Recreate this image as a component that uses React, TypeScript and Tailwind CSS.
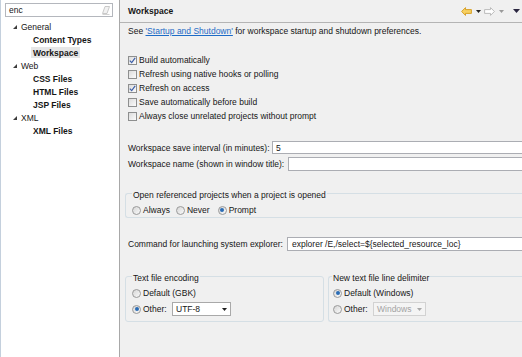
import React from "react";

function Check({ on }: { on?: boolean }) {
  return (
    <span className="w-[9px] h-[9px] shrink-0 border border-[#8e8f8f] bg-linear-to-br from-[#dcdcdc] to-[#fbfbfb] flex items-center justify-center">
      {on && (
        <svg width="7" height="7" viewBox="0 0 7 7">
          <path d="M0.8 3.6 L2.7 5.6 L6.2 0.9" stroke="#3b5ea8" strokeWidth="1.2" fill="none" />
        </svg>
      )}
    </span>
  );
}

function Radio({ on }: { on?: boolean }) {
  return (
    <span className="w-[9px] h-[9px] shrink-0 rounded-full border border-[#9a9a9a] bg-linear-to-br from-[#d6d6d6] to-[#fafafa] flex items-center justify-center">
      {on && <span className="w-[4px] h-[4px] rounded-full bg-[#2a6cb5]" />}
    </span>
  );
}

function Tri({ color, w, h }: { color: string; w: number; h: number }) {
  return (
    <svg width={w} height={h} viewBox={`0 0 ${w} ${h}`}>
      <path d={`M0 0 L${w} 0 L${w / 2} ${h} Z`} fill={color} />
    </svg>
  );
}

function TreeParent({ label }: { label: string }) {
  return (
    <div className="h-[13px] flex items-center pl-[12px] gap-[4px]">
      <svg width="4" height="4" viewBox="0 0 4 4">
        <path d="M4 0 L4 4 L0 4 Z" fill="#3c3c3c" />
      </svg>
      <span>{label}</span>
    </div>
  );
}

function TreeChild({ label, selected }: { label: string; selected?: boolean }) {
  return (
    <div className="h-[13px] flex items-center pl-[30px]">
      <span className={`px-[2px] h-[11px] flex items-center font-bold ${selected ? "bg-[#e6e6e6]" : ""}`}>{label}</span>
    </div>
  );
}

function CheckRow({ on, label }: { on?: boolean; label: string }) {
  return (
    <div className="h-[14px] flex items-center gap-[2px]">
      <Check on={on} />
      <span>{label}</span>
    </div>
  );
}

export default function App() {
  return (
    <div className="w-[522px] h-[357px] flex overflow-hidden bg-[#f0f0f0] text-[8.5px] leading-[12px] text-[#161616] font-['Liberation_Sans',Arial,sans-serif]">
      {/* Left tree panel */}
      <div className="w-[120px] shrink-0 h-full bg-white border-l border-l-[#c4d0dd] border-r border-r-[#a8a8a8] flex flex-col">
        <div className="mt-[3px] ml-[4px] w-[108px] h-[14px] border border-[#b4b7bd] flex items-center justify-between pl-[3px] pr-[2px]">
          <span>enc</span>
          <svg width="8" height="9" viewBox="0 0 8 9">
            <path d="M3 0.5 L7.5 0.5 L5 7.5 L0.5 7.5 Z" fill="#f2f2f2" stroke="#bdbdbd" strokeWidth="0.8" />
            <path d="M0.5 8.5 L7.5 8.5" stroke="#c8c8c8" strokeWidth="0.8" />
          </svg>
        </div>
        <div className="mt-[3px] flex flex-col">
          <TreeParent label="General" />
          <TreeChild label="Content Types" />
          <TreeChild label="Workspace" selected />
          <TreeParent label="Web" />
          <TreeChild label="CSS Files" />
          <TreeChild label="HTML Files" />
          <TreeChild label="JSP Files" />
          <TreeParent label="XML" />
          <TreeChild label="XML Files" />
        </div>
      </div>

      {/* Right preference page */}
      <div className="flex-1 min-w-0 flex flex-col">
        <div className="h-[23px] shrink-0 border-b border-[#b4b4b4] flex items-center pl-[8px] pr-[2px]">
          <span className="font-bold">Workspace</span>
          <div className="ml-auto flex items-center">
            <svg width="11" height="9" viewBox="0 0 11 9">
              <path d="M0.6 4.5 L4.5 0.6 V2.6 H10.4 V6.4 H4.5 V8.4 Z" fill="#f7d061" stroke="#d49a1c" strokeWidth="0.9" />
            </svg>
            <span className="ml-[4px]"><Tri color="#222" w={5} h={3} /></span>
            <svg className="ml-[3px]" width="11" height="9" viewBox="0 0 11 9">
              <path d="M10.4 4.5 L6.5 0.6 V2.6 H0.6 V6.4 H6.5 V8.4 Z" fill="#ffffff" stroke="#b4b4b4" strokeWidth="0.9" />
            </svg>
            <span className="ml-[4px]"><Tri color="#9a9a9a" w={5} h={3} /></span>
            <span className="ml-[9px]"><Tri color="#2a2640" w={7} h={4} /></span>
          </div>
        </div>

        <div className="pl-[8px] flex flex-col">
          <div className="mt-[2px] h-[12px] whitespace-nowrap">
            See <span className="text-[#1d6bc6] underline">'Startup and Shutdown'</span> for workspace startup and shutdown preferences.
          </div>

          <div className="mt-[16px] flex flex-col">
            <CheckRow on label="Build automatically" />
            <CheckRow label="Refresh using native hooks or polling" />
            <CheckRow on label="Refresh on access" />
            <CheckRow label="Save automatically before build" />
            <CheckRow label="Always close unrelated projects without prompt" />
          </div>

          <div className="mt-[18px] h-[13px] flex items-center">
            <span className="w-[144px] shrink-0 whitespace-nowrap">Workspace save interval (in minutes):</span>
            <div className="flex-1 h-[13px] bg-white border border-[#abadb3] border-r-0 pl-[3px] flex items-center">5</div>
          </div>
          <div className="mt-[3px] h-[14px] flex items-center">
            <span className="w-[160px] shrink-0 whitespace-nowrap">Workspace name (shown in window title):</span>
            <div className="flex-1 h-[14px] bg-white border border-[#abadb3] border-r-0" />
          </div>

          <div className="mt-[22px] -ml-[3px] border border-[#d5dfe5] border-r-0 rounded-l-[3px] pb-[1px]">
            <div className="-mt-[5px] ml-[6px] w-fit px-[1px] bg-[#f0f0f0] h-[12px] whitespace-nowrap">
              Open referenced projects when a project is opened
            </div>
            <div className="mt-[3px] h-[12px] flex items-center pl-[6px]">
              <span className="flex items-center gap-[2px]"><Radio /><span>Always</span></span>
              <span className="ml-[6px] flex items-center gap-[2px]"><Radio /><span>Never</span></span>
              <span className="ml-[8px] flex items-center gap-[2px]"><Radio on /><span>Prompt</span></span>
            </div>
          </div>

          <div className="mt-[19px] h-[14px] flex items-center">
            <span className="w-[159px] shrink-0 whitespace-nowrap">Command for launching system explorer:</span>
            <div className="flex-1 h-[14px] bg-white border border-[#abadb3] border-r-0 pl-[4px] flex items-center whitespace-nowrap overflow-hidden">
              explorer /E,/select=${"{"}selected_resource_loc{"}"}
            </div>
          </div>

          <div className="mt-[25px] -ml-[3px] flex gap-[4px]">
            <div className="w-[199px] shrink-0 border border-[#d5dfe5] rounded-[3px] pb-[5px]">
              <div className="-mt-[5px] ml-[6px] w-fit px-[1px] bg-[#f0f0f0] h-[12px] whitespace-nowrap">Text file encoding</div>
              <div className="mt-[3px] h-[12px] flex items-center gap-[2px] pl-[6px]">
                <Radio /><span>Default (GBK)</span>
              </div>
              <div className="mt-[3px] h-[14px] flex items-center pl-[6px]">
                <Radio on />
                <span className="ml-[2px] w-[29px]">Other:</span>
                <div className="w-[59px] h-[14px] bg-white border border-[#a9a9a9] flex items-center justify-between pl-[3px] pr-[3px]">
                  <span>UTF-8</span>
                  <Tri color="#1e1e1e" w={5} h={3} />
                </div>
              </div>
            </div>
            <div className="flex-1 border border-[#d5dfe5] border-r-0 rounded-l-[3px] pb-[5px]">
              <div className="-mt-[5px] ml-[3px] w-fit px-[1px] bg-[#f0f0f0] h-[12px] whitespace-nowrap">New text file line delimiter</div>
              <div className="mt-[3px] h-[12px] flex items-center gap-[2px] pl-[4px]">
                <Radio on /><span>Default (Windows)</span>
              </div>
              <div className="mt-[3px] h-[14px] flex items-center pl-[4px]">
                <Radio />
                <span className="ml-[2px] w-[29px]">Other:</span>
                <div className="w-[53px] h-[14px] bg-[#f4f4f4] border border-[#d2d2d2] text-[#a3a3a3] flex items-center justify-between pl-[3px] pr-[3px]">
                  <span>Windows</span>
                  <Tri color="#a8a8a8" w={5} h={3} />
                </div>
              </div>
            </div>
          </div>
        </div>
      </div>
    </div>
  );
}
